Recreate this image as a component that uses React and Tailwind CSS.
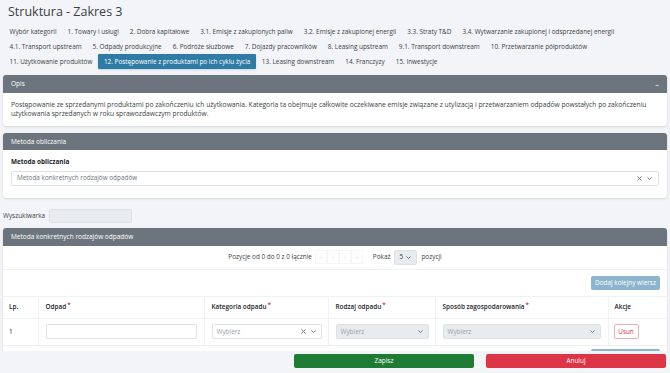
import React from 'react';

const tabs = [
    ['Wybór kategorii', '1. Towary i usługi', '2. Dobra kapitałowe', '3.1. Emisje z zakupionych paliw', '3.2. Emisje z zakupionej energii', '3.3. Straty T&D', '3.4. Wytwarzanie zakupionej i odsprzedanej energii'],
    ['4.1. Transport upstream', '5. Odpady produkcyjne', '6. Podróże służbowe', '7. Dojazdy pracowników', '8. Leasing upstream', '9.1. Transport downstream', '10. Przetwarzanie półproduktów'],
    ['11. Użytkowanie produktów', '12. Postępowanie z produktami po ich cyklu życia', '13. Leasing downstream', '14. Franczyzy', '15. Inwestycje'],
];

const ACTIVE = '12. Postępowanie z produktami po ich cyklu życia';

function Chevron() {
    return (
        <svg width="7" height="7" viewBox="0 0 10 10" fill="none" stroke="#6b7280" strokeWidth="1.3">
            <path d="M2 3.5 L5 6.5 L8 3.5" />
        </svg>
    );
}

function Cross() {
    return (
        <svg width="7" height="7" viewBox="0 0 10 10" fill="none" stroke="#6b7280" strokeWidth="1.3">
            <path d="M2 2 L8 8 M8 2 L2 8" />
        </svg>
    );
}

function Req({ children }) {
    return (
        <span>
            {children}
            <span className="text-[#dc3545] relative -top-[2px] ml-[1px]">*</span>
        </span>
    );
}

export default function App() {
    return (
        <div className="min-h-screen bg-[#f3f4f8] text-[#343a40] font-['Open_Sans',sans-serif] px-[3px] pb-[40px]">
            {/* Title */}
            <h1 className="pl-[5px] pt-[3px] h-[24px] text-[12.5px] leading-[17px] text-[#3a3f44]">Struktura - Zakres 3</h1>

            {/* Tabs */}
            <div className="flex flex-col pl-[1px]">
                {tabs.map((row, i) => (
                    <div key={i} className="flex h-[15px] items-center">
                        {row.map((t) => (
                            <div
                                key={t}
                                className={
                                    t === ACTIVE
                                        ? 'h-[15px] px-[6px] flex items-center text-[6.4px] bg-[#2e7ba6] text-white rounded-[1px] shadow-sm'
                                        : 'h-[15px] px-[5.5px] flex items-center text-[6.4px] text-[#3a3f44]'
                                }
                            >
                                {t}
                            </div>
                        ))}
                    </div>
                ))}
            </div>

            {/* Opis */}
            <div className="mt-[6px] bg-white rounded-[3px] shadow-sm overflow-hidden">
                <div className="h-[18px] bg-[#6c757d] text-white text-[6.5px] px-[8px] flex items-center justify-between">
                    <span>Opis</span>
                    <span className="text-[8px] leading-none">–</span>
                </div>
                <div className="px-[8px] pt-[7px] pb-[8px] text-[6.7px] leading-[9px] text-[#3a3f44]">
                    Postępowanie ze sprzedanymi produktami po zakończeniu ich użytkowania. Kategoria ta obejmuje całkowite oczekiwane emisje związane z utylizacją i przetwarzaniem odpadów powstałych po zakończeniu użytkowania sprzedanych w roku sprawozdawczym produktów.
                </div>
            </div>

            {/* Metoda obliczania */}
            <div className="mt-[7px] bg-white rounded-[3px] shadow-sm overflow-hidden">
                <div className="h-[17px] bg-[#6c757d] text-white text-[6.5px] px-[8px] flex items-center">Metoda obliczania</div>
                <div className="px-[8px] pt-[7px] pb-[12px]">
                    <div className="text-[6.4px] font-bold text-[#212529] mb-[4px]">Metoda obliczania</div>
                    <div className="h-[15px] border border-[#dee2e6] rounded-[2px] flex items-center justify-between px-[5px] text-[6.4px] text-[#6c757d]">
                        <span>Metoda konkretnych rodzajów odpadów</span>
                        <span className="flex items-center gap-[3px]">
                            <Cross />
                            <Chevron />
                        </span>
                    </div>
                </div>
            </div>

            {/* Wyszukiwarka */}
            <div className="mt-[11px] flex items-center gap-[4px] text-[6.4px] text-[#3a3f44]">
                <span>Wyszukiwarka</span>
                <div className="w-[83px] h-[14px] bg-[#e9ecef] border border-[#dee2e6] rounded-[2px]" />
            </div>

            {/* Table card */}
            <div className="mt-[5px] bg-white rounded-[3px] shadow-sm overflow-hidden">
                <div className="h-[18px] bg-[#6c757d] text-white text-[6.5px] px-[8px] flex items-center">Metoda konkretnych rodzajów odpadów</div>

                <div className="h-[24px] flex items-center justify-center border-b border-[#f0f1f3] text-[6.4px] text-[#3a3f44]">
                    <span className="mr-[3px]">Pozycje od 0 do 0 z 0 łącznie</span>
                    <div className="flex mr-[10px] text-[#e1e3e6]">
                        {['«', '‹', '›', '»'].map((c) => (
                            <span key={c} className="w-[12px] h-[14px] border border-[#f5f6f7] flex items-center justify-center text-[6px]">{c}</span>
                        ))}
                    </div>
                    <span className="mr-[4px]">Pokaż</span>
                    <div className="w-[23px] h-[15px] bg-[#e9ecef] border border-[#dee2e6] rounded-[2px] flex items-center justify-between px-[4px] mr-[4px]">
                        <span>5</span>
                        <Chevron />
                    </div>
                    <span>pozycji</span>
                </div>

                <div className="flex justify-end pr-[7px] pt-[6px] pb-[6px]">
                    <div className="w-[69px] h-[14px] bg-[#8cb4cf] rounded-[2px] text-white text-[6.4px] flex items-center justify-center">Dodaj kolejny wiersz</div>
                </div>

                <table className="w-full border-collapse text-[6.4px] text-[#212529]">
                    <thead>
                        <tr className="h-[22px] border-y border-[#f0f1f3] font-bold text-left">
                            <th className="w-[35px] pl-[6px] border-r border-[#f0f1f3] font-semibold">Lp.</th>
                            <th className="w-[163px] pl-[7px] border-r border-[#f0f1f3] font-semibold"><Req>Odpad</Req></th>
                            <th className="w-[124px] pl-[7px] border-r border-[#f0f1f3] font-semibold"><Req>Kategoria odpadu</Req></th>
                            <th className="w-[107px] pl-[7px] border-r border-[#f0f1f3] font-semibold"><Req>Rodzaj odpadu</Req></th>
                            <th className="w-[173px] pl-[7px] border-r border-[#f0f1f3] font-semibold"><Req>Sposób zagospodarowania</Req></th>
                            <th className="pl-[6px] font-semibold">Akcje</th>
                        </tr>
                    </thead>
                    <tbody>
                        <tr className="h-[27px] border-b border-[#f0f1f3]">
                            <td className="pl-[6px] border-r border-[#f0f1f3]">1</td>
                            <td className="px-[7px] border-r border-[#f0f1f3]">
                                <div className="h-[15px] border border-[#dee2e6] rounded-[2px] w-[151px]" />
                            </td>
                            <td className="pl-[7px] pr-[6px] border-r border-[#f0f1f3]">
                                <div className="h-[15px] border border-[#dee2e6] rounded-[2px] flex items-center justify-between px-[4px] text-[#9aa0a6]">
                                    <span>Wybierz</span>
                                    <span className="flex items-center gap-[3px]"><Cross /><Chevron /></span>
                                </div>
                            </td>
                            <td className="pl-[7px] pr-[6px] border-r border-[#f0f1f3]">
                                <div className="h-[15px] bg-[#e9ecef] border border-[#dee2e6] rounded-[2px] flex items-center justify-between px-[4px] text-[#9aa0a6]">
                                    <span>Wybierz</span>
                                    <Chevron />
                                </div>
                            </td>
                            <td className="pl-[7px] pr-[7px] border-r border-[#f0f1f3]">
                                <div className="h-[15px] bg-[#e9ecef] border border-[#dee2e6] rounded-[2px] flex items-center justify-between px-[4px] text-[#9aa0a6]">
                                    <span>Wybierz</span>
                                    <Chevron />
                                </div>
                            </td>
                            <td className="pl-[5px]">
                                <div className="w-[25px] h-[15px] border border-[#f1aeb5] rounded-[2px] text-[#dc3545] flex items-center justify-center">Usuń</div>
                            </td>
                        </tr>
                    </tbody>
                </table>

                <div className="flex justify-end pr-[7px] pt-[3px] pb-[6px]">
                    <div className="w-[69px] h-[14px] bg-[#8cb4cf] rounded-[2px] text-white text-[6.4px] flex items-center justify-center">Dodaj kolejny wiersz</div>
                </div>
            </div>

            {/* Sticky footer */}
            <div className="fixed bottom-0 left-0 right-0 h-[22px] bg-[#f3f4f8] flex justify-end items-start pt-[3px] pr-[4px] gap-[12px]">
                <button className="w-[180px] h-[14px] bg-[#1e7b34] text-white text-[6.4px] rounded-[2px]">Zapisz</button>
                <button className="w-[180px] h-[14px] bg-[#dc3545] text-white text-[6.4px] rounded-[2px]">Anuluj</button>
            </div>
        </div>
    );
}
